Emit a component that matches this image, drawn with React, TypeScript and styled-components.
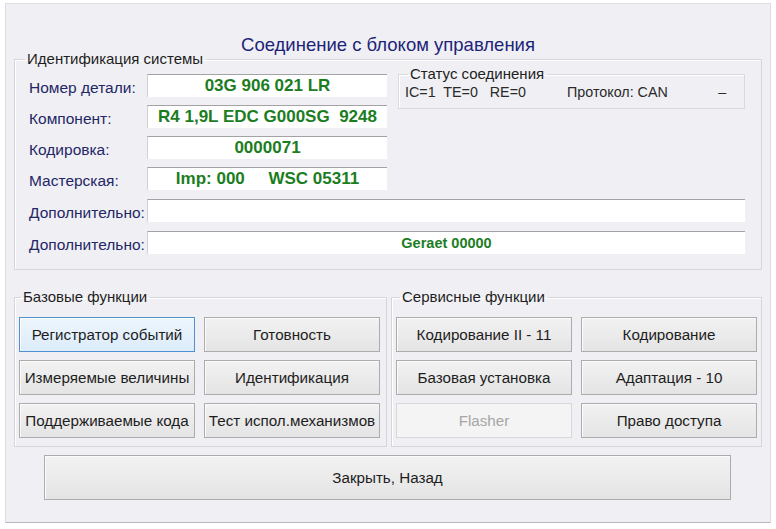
import React from 'react';
import styled, { createGlobalStyle, css } from 'styled-components';

const GlobalStyle = createGlobalStyle`
  html, body {
    margin: 0;
    padding: 0;
    background: #ffffff;
  }
  body {
    font-family: 'Liberation Sans', Arial, sans-serif;
    color: #222;
  }
`;

const Window = styled.div`
  box-sizing: border-box;
  width: 766px;
  height: 520px;
  margin: 3px 0 0 5px;
  padding: 30px 8px 0 8px;
  background: #f0f0f4;
  border: 1px solid #dedee2;
  border-bottom-color: #b9b9bd;
  display: flex;
  flex-direction: column;
`;

const Title = styled.div`
  text-align: center;
  font-size: 18.5px;
  line-height: 18px;
  color: #1d2478;
  margin: 2px 0 -3px;
`;

const Group = styled.fieldset`
  box-sizing: border-box;
  margin: 0;
  min-width: 0;
  border: 1px solid #d6d6da;
  box-shadow: inset 1px 1px 0 #ffffff;
`;

const Legend = styled.legend<{ $shift: number }>`
  font-size: 15px;
  line-height: 16px;
  color: #1e1e1e;
  padding: 0 3px 0 2px;
  margin-left: ${({ $shift }) => $shift}px;
`;

const IdentGroup = styled(Group)`
  padding: 7px 16px 15px 14px;
`;

const TopPart = styled.div`
  display: flex;
  align-items: flex-start;
`;

const Rows = styled.div`
  display: flex;
  flex-direction: column;
  gap: 8px;
`;

const Row = styled.div`
  display: flex;
  align-items: center;
  height: 23px;
`;

const Label = styled.div`
  width: 118px;
  padding-top: 5px;
  font-size: 15.5px;
  color: #242666;
  white-space: nowrap;
`;

const Field = styled.div<{ $wide?: boolean; $small?: boolean }>`
  box-sizing: border-box;
  width: ${({ $wide }) => ($wide ? '598px' : '240px')};
  height: 23px;
  background: #ffffff;
  border-top: 1px solid #a3a3a6;
  border-left: 1px solid #d2d2d6;
  display: flex;
  align-items: center;
  justify-content: center;
  color: #1c7d1f;
  font-weight: bold;
  white-space: pre;
  ${({ $small }) =>
    $small
      ? css`
          font-size: 14.5px;
        `
      : css`
          font-size: 17px;
        `}
`;

const StatusGroup = styled(Group)`
  width: 347px;
  height: 43px;
  margin: -8px 0 0 11px;
  padding: 0 6px;
  border-color: #dadade;
`;

const StatusLine = styled.div`
  display: flex;
  font-size: 14.3px;
  color: #2a2a2a;
  padding-top: 2px;
`;

const StatusItem = styled.span<{ $w: number }>`
  width: ${({ $w }) => $w}px;
  white-space: pre;
`;

const Lower = styled.div`
  display: flex;
  flex-direction: column;
  gap: 9px;
  margin-top: 9px;
`;

const Functions = styled.div`
  display: flex;
  gap: 4px;
  margin-top: 19px;
`;

const FuncGroup = styled(Group)<{ $w: number }>`
  width: ${({ $w }) => $w}px;
  padding: 12px 5px 8px 4px;
`;

const ButtonGrid = styled.div`
  display: grid;
  grid-template-columns: 176px 176px;
  grid-auto-rows: 35px;
  column-gap: 9px;
  row-gap: 8px;
`;

const Button = styled.button<{ $focused?: boolean }>`
  box-sizing: border-box;
  margin: 0;
  padding: 0;
  font-family: 'Liberation Sans', Arial, sans-serif;
  font-size: 15.2px;
  color: #1e1e1e;
  white-space: nowrap;
  border: 1px solid #acacac;
  border-radius: 0;
  background: linear-gradient(#f2f2f2, #e4e4e4);
  box-shadow: inset 1px 1px 0 #fbfbfb;
  ${({ $focused }) =>
    $focused &&
    css`
      border-color: #4e92d2;
      background: linear-gradient(#edf5fc, #dcecfa);
    `}
  &:disabled {
    color: #a6a6a6;
    border-color: #d8d8d8;
    background: #f4f4f4;
    box-shadow: none;
  }
`;

const CloseButton = styled(Button)`
  width: 687px;
  height: 45px;
  margin: 8px 0 0 30px;
`;

const basic = ['Регистратор событий', 'Готовность', 'Измеряемые величины', 'Идентификация', 'Поддерживаемые кода', 'Тест испол.механизмов'];

const service = ['Кодирование II - 11', 'Кодирование', 'Базовая установка', 'Адаптация - 10', 'Flasher', 'Право доступа'];

const App = () => (
  <>
    <GlobalStyle />
    <Window>
      <Title>Соединение с блоком управления</Title>
      <IdentGroup>
        <Legend $shift={-4}>Идентификация системы</Legend>
        <TopPart>
          <Rows>
            <Row>
              <Label>Номер детали:</Label>
              <Field>03G 906 021 LR</Field>
            </Row>
            <Row>
              <Label>Компонент:</Label>
              <Field>R4 1,9L EDC G000SG  9248</Field>
            </Row>
            <Row>
              <Label>Кодировка:</Label>
              <Field>0000071</Field>
            </Row>
            <Row>
              <Label>Мастерская:</Label>
              <Field>Imp: 000     WSC 05311</Field>
            </Row>
          </Rows>
          <StatusGroup>
            <Legend $shift={3}>Статус соединения</Legend>
            <StatusLine>
              <StatusItem $w={163}>IC=1  TE=0   RE=0</StatusItem>
              <StatusItem $w={152}>Протокол: CAN</StatusItem>
              <StatusItem $w={20}>–</StatusItem>
            </StatusLine>
          </StatusGroup>
        </TopPart>
        <Lower>
          <Row>
            <Label>Дополнительно:</Label>
            <Field $wide />
          </Row>
          <Row>
            <Label>Дополнительно:</Label>
            <Field $wide $small>
              Geraet 00000
            </Field>
          </Row>
        </Lower>
      </IdentGroup>
      <Functions>
        <FuncGroup $w={373}>
          <Legend $shift={2}>Базовые функции</Legend>
          <ButtonGrid>
            {basic.map((b, i) => (
              <Button key={b} $focused={i === 0}>
                {b}
              </Button>
            ))}
          </ButtonGrid>
        </FuncGroup>
        <FuncGroup $w={371}>
          <Legend $shift={4}>Сервисные функции</Legend>
          <ButtonGrid>
            {service.map((b) => (
              <Button key={b} disabled={b === 'Flasher'}>
                {b}
              </Button>
            ))}
          </ButtonGrid>
        </FuncGroup>
      </Functions>
      <CloseButton>Закрыть, Назад</CloseButton>
    </Window>
  </>
);

export default App;
